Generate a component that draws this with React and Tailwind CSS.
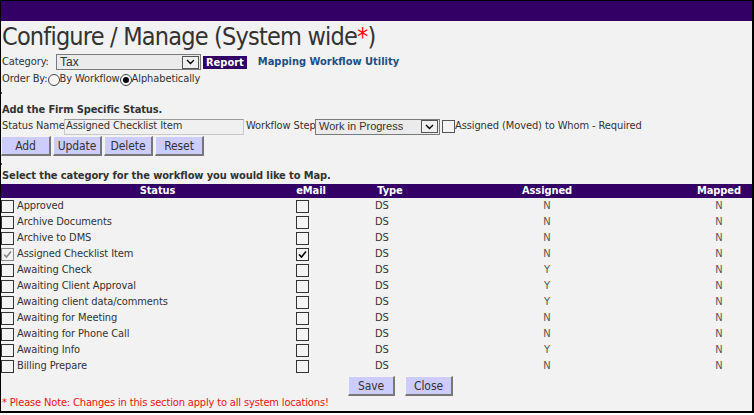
import React from 'react';

const rows = [
  { name: 'Approved', assigned: 'N' },
  { name: 'Archive Documents', assigned: 'N' },
  { name: 'Archive to DMS', assigned: 'N' },
  { name: 'Assigned Checklist Item', assigned: 'N', checked: true },
  { name: 'Awaiting Check', assigned: 'Y' },
  { name: 'Awaiting Client Approval', assigned: 'Y' },
  { name: 'Awaiting client data/comments', assigned: 'Y' },
  { name: 'Awaiting for Meeting', assigned: 'N' },
  { name: 'Awaiting for Phone Call', assigned: 'N' },
  { name: 'Awaiting Info', assigned: 'Y' },
  { name: 'Billing Prepare', assigned: 'N' },
];

const font = 'font-["DejaVu_Sans_Condensed","Liberation_Sans",sans-serif]';

const Check = ({ checked, muted }) => (
  <span
    className={`w-[13px] h-[13px] border flex items-center justify-center shrink-0 ${
      muted ? 'border-[#8a8a8a]' : 'border-[#333]'
    } bg-[#f4f4f4]`}
  >
    {checked && (
      <svg width="9" height="9" viewBox="0 0 9 9">
        <path d="M1 4.5 L3.5 7 L8 1.5" fill="none" stroke={muted ? '#888' : '#000'} strokeWidth="1.6" />
      </svg>
    )}
  </span>
);

const Radio = ({ on }) => (
  <span className="w-[12px] h-[12px] rounded-full border border-[#444] bg-[#f8f8f8] flex items-center justify-center shrink-0">
    {on && <span className="w-[6px] h-[6px] rounded-full bg-black" />}
  </span>
);

const Chevron = () => (
  <span className="w-[17px] h-[13px] border border-[#555] flex items-center justify-center bg-[#f0f0f0]">
    <svg width="9" height="6" viewBox="0 0 9 6">
      <path d="M1 1 L4.5 4.5 L8 1" fill="none" stroke="#000" strokeWidth="1.4" />
    </svg>
  </span>
);

const Btn = ({ children, w }) => (
  <button
    className={`${w} h-[20px] bg-[#ccccff] text-[#333] text-[12px] border border-t-[#f4f4f4] border-l-[#f4f4f4] border-r-2 border-b-2 border-r-[#777] border-b-[#777] leading-none`}
  >
    {children}
  </button>
);

export default function App() {
  return (
    <div className="bg-white w-[754px] h-[415px]">
      <div
        className={`w-[754px] h-[413px] bg-[#f2f2f2] border-l border-t border-r-2 border-b-2 border-black flex flex-col text-[#333] text-[11px] tracking-[-0.1px] whitespace-nowrap ${font}`}
      >
        <div className="h-[20px] bg-[#330066] shrink-0" />

        <div className="h-[32px] leading-[32px] text-[25px] tracking-[-0.8px] pl-[1px]">
          Configure / Manage (System wide<span className="text-[#ff0000]">*</span>)
        </div>

        <div className="h-[18px] flex items-center pl-[1px]">
          <span className="w-[54px] shrink-0">Category:</span>
          <span className="w-[145px] h-[16px] border border-[#7a7a7a] bg-[#ebebeb] flex items-center justify-between pl-[3px] pr-[1px] font-['Liberation_Sans',sans-serif] text-[12px] tracking-normal shrink-0">
            Tax
            <Chevron />
          </span>
          <span className="ml-[2px] bg-[#330066] text-white font-bold text-[11px] tracking-normal px-[3px] h-[13px] leading-[13px]">Report</span>
          <span className="ml-[11px] text-[#1f4e85] font-bold text-[11px] tracking-normal">Mapping Workflow Utility</span>
        </div>

        <div className="h-[17px] flex items-center pl-[1px]">
          Order By:
          <Radio />
          By Workflow
          <Radio on />
          Alphabetically
        </div>

        <div className="h-[14px]">
          <span className="block w-[1px] h-[2px] bg-[#555] mt-[4px]" />
        </div>

        <div className="h-[15px] pt-[2px] flex items-center font-bold pl-[1px]">
          Add the Firm Specific Status.
        </div>

        <div className="h-[19px] flex items-center pl-[1px]">
          <span className="w-[62px] shrink-0">Status Name</span>
          <span className="w-[180px] h-[16px] border border-[#c8c8c8] border-t-[#9a9a9a] bg-[#f0f0f0] flex items-center pl-[1px] shrink-0">
            Assigned Checklist Item
          </span>
          <span className="ml-[2px] w-[69px] shrink-0">Workflow Step</span>
          <span className="w-[125px] h-[16px] border border-[#7a7a7a] bg-[#ebebeb] flex items-center justify-between pl-[3px] pr-[1px] font-['Liberation_Sans',sans-serif] text-[11px] tracking-normal shrink-0">
            Work in Progress
            <Chevron />
          </span>
          <span className="ml-[2px] w-[13px] h-[13px] border border-[#555] bg-[#f4f4f4] shrink-0" />
          <span>Assigned (Moved) to Whom - Required</span>
        </div>

        <div className="flex gap-[2px] pl-0 h-[20px]">
          <Btn w="w-[50px]">Add</Btn>
          <Btn w="w-[49px]">Update</Btn>
          <Btn w="w-[49px]">Delete</Btn>
          <Btn w="w-[49px]">Reset</Btn>
        </div>

        <div className="h-[12px]">
          <span className="block w-[1px] h-[2px] bg-[#555] mt-[7px]" />
        </div>

        <div className="h-[16px] flex items-center font-bold pl-[1px]">
          Select the category for the workflow you would like to Map.
        </div>

        <div className="h-[14px] bg-[#330066] text-white font-bold flex items-center shrink-0">
          <span className="w-[295px] pl-[18px] text-center">Status</span>
          <span className="w-[30px] text-center">eMail</span>
          <span className="w-[128px] text-center">Type</span>
          <span className="w-[186px] text-center">Assigned</span>
          <span className="w-[112px] pl-[46px] text-center">Mapped</span>
        </div>

        <div className="flex flex-col">
          {rows.map((r) => (
            <div key={r.name} className="h-[16px] pt-[1px] flex items-center">
              <span className="w-[295px] flex items-center gap-[3px]">
                <Check checked={r.checked} muted={r.checked} />
                {r.name}
              </span>
              <span className="w-[30px] flex">
                <Check checked={r.checked} />
              </span>
              <span className="w-[128px] pl-[49px]">DS</span>
              <span className="w-[186px] text-center text-[#555]">{r.assigned}</span>
              <span className="w-[112px] pl-[46px] text-center text-[#555]">N</span>
            </div>
          ))}
        </div>

        <div className="flex gap-[10px] h-[22px] items-end pl-[347px]">
          <Btn w="w-[47px]">Save</Btn>
          <Btn w="w-[48px]">Close</Btn>
        </div>

        <div className="h-[14px] flex items-center text-[#ee1111] tracking-[-0.15px] pl-[1px]">
          * Please Note: Changes in this section apply to all system locations!
        </div>
      </div>
    </div>
  );
}
